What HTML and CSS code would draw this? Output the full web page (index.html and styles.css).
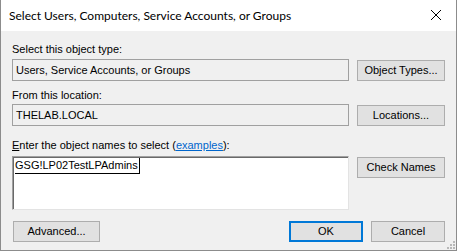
FILE: index.html
```html
<!DOCTYPE html>
<html lang="en">
  <head>
    <meta charset="UTF-8" />
    <title>Select Users, Computers, Service Accounts, or Groups</title>
    <link rel="stylesheet" href="styles.css">
  </head>
  <body>
    <div class="window">
      <div class="titlebar">
        <span class="title">Select Users, Computers, Service Accounts, or Groups</span>
        <svg class="close" width="12" height="12" viewBox="0 0 12 12">
          <path d="M1 1 L11 11 M11 1 L1 11" stroke="#000" stroke-width="1" fill="none" />
        </svg>
      </div>

      <div class="content">
        <div class="label first">Select this object type:</div>
        <div class="row">
          <div class="field">Users, Service Accounts, or Groups</div>
          <div class="btn">Object Types...</div>
        </div>

        <div class="label">From this location:</div>
        <div class="row">
          <div class="field">THELAB.LOCAL</div>
          <div class="btn">Locations...</div>
        </div>

        <div class="label names"><u>E</u>nter the object names to select (<a class="link" href="#">examples</a>):</div>
        <div class="row">
          <div class="textarea"><span class="entry">GSG!LP02TestLPAdmins</span></div>
          <div class="btn">Check Names</div>
        </div>

        <div class="footer">
          <div class="btn advanced">Advanced...</div>
          <div class="spacer"></div>
          <div class="btn ok">OK</div>
          <div class="btn">Cancel</div>
        </div>

        <div class="grip">
          <svg width="10" height="10" viewBox="0 0 10 10">
            <rect x="7" y="1" width="2" height="2" fill="#b8b8b8" />
            <rect x="4" y="4" width="2" height="2" fill="#b8b8b8" />
            <rect x="7" y="4" width="2" height="2" fill="#b8b8b8" />
            <rect x="1" y="7" width="2" height="2" fill="#b8b8b8" />
            <rect x="4" y="7" width="2" height="2" fill="#b8b8b8" />
            <rect x="7" y="7" width="2" height="2" fill="#b8b8b8" />
          </svg>
        </div>
      </div>
    </div>
  </body>
</html>
```

FILE: styles.css
```css
* {
  box-sizing: border-box;
}

body {
  margin: 0;
  font-family: "Liberation Sans", Arial, sans-serif;
  font-size: 11px;
  color: #000;
  background: #2b3a4a;
}

.window {
  width: 457px;
  height: 251px;
  border: 1px solid #8c8c8c;
  border-top: none;
  background: #f0f0f0;
  display: flex;
  flex-direction: column;
}

.titlebar {
  height: 31px;
  background: #fff;
  display: flex;
  align-items: center;
  padding: 0 10px 1px 8px;
  font-family: Lato, "Noto Sans", sans-serif;
  font-size: 12px;
}

.title {
  flex: 1;
}

.close {
  margin-right: 4px;
}

.content {
  position: relative;
  flex: 1;
  padding: 0 11px 0 11px;
}

.label {
  height: 15px;
  line-height: 15px;
  margin-top: 7px;
  margin-bottom: 1px;
}

.label.first {
  margin-top: 11px;
  margin-bottom: 2px;
}

.label.names {
  margin-top: 12px;
  margin-bottom: 3px;
}

.link {
  color: #0066cc;
}

.row {
  display: flex;
  gap: 8px;
  align-items: flex-start;
}

.field {
  flex: 1;
  height: 22px;
  line-height: 20px;
  padding: 0 3px;
  border: 1px solid #a0a0a0;
  background: #f0f0f0;
}

.textarea {
  flex: 1;
  height: 54px;
  padding: 1px 2px;
  background: #fff;
  border: 1px solid;
  border-color: #a0a0a0 #e3e3e3 #e3e3e3 #a0a0a0;
  box-shadow: inset 1px 1px 0 #696969;
  line-height: 15px;
}

.entry {
  display: inline-block;
  padding-right: 1px;
  border-bottom: 1px solid #000;
  border-right: 1px solid #000;
}

.btn {
  width: 88px;
  height: 21px;
  margin-top: 1px;
  line-height: 19px;
  text-align: center;
  background: #e1e1e1;
  border: 1px solid #adadad;
}

.footer {
  display: flex;
  gap: 8px;
  margin-top: 10px;
  padding-left: 1px;
}

.spacer {
  flex: 1;
}

.btn.ok {
  line-height: 17px;
  border: 2px solid #0078d7;
}

.footer .btn {
  width: 74px;
}

.footer .btn.advanced {
  width: 87px;
}

.grip {
  position: absolute;
  right: 0;
  bottom: 0;
  line-height: 0;
}
```
